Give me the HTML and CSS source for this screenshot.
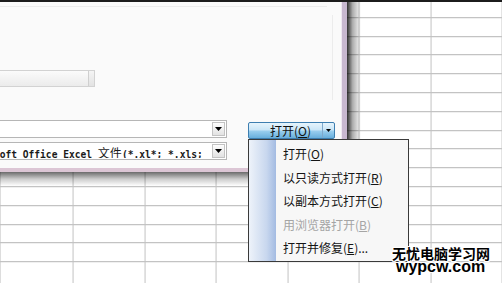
FILE: index.html
```html
<!DOCTYPE html>
<html lang="zh-CN">
<head>
<meta charset="utf-8">
<title>打开</title>
<link rel="stylesheet" href="styles.css">
</head>
<body>
<div class="screen">
  <div class="topline"></div>
  <div class="sheet"></div>

  <div class="dialog">
    <div class="dlg-head"></div>
    <div class="dlg-body">
      <div class="list">
        <div class="hscroll"><div class="thumb"></div></div>
      </div>
      <div class="divider"></div>
    </div>
    <div class="dlg-foot">
      <div class="row">
        <div class="combo">
          <span class="combo-text"></span>
          <span class="drop"><svg width="7" height="4" viewBox="0 0 7 4"><path d="M0 0h7L3.5 4z" fill="#000"/></svg></span>
        </div>
        <div class="split-btn">
          <span class="btn-label">打开(<u>O</u>)</span>
          <span class="btn-arrow"><svg width="5" height="3" viewBox="0 0 5 3"><path d="M0 0h5L2.5 3z" fill="#000"/></svg></span>
        </div>
      </div>
      <div class="row">
        <div class="combo">
          <span class="combo-text mono">Microsoft Office Excel <span class="cjk">文件</span>(*.xl*; *.xls;</span>
          <span class="drop"><svg width="7" height="4" viewBox="0 0 7 4"><path d="M0 0h7L3.5 4z" fill="#000"/></svg></span>
        </div>
      </div>
    </div>
  </div>

  <div class="menu">
    <div class="gutter"></div>
    <ul class="items">
      <li>打开(<u>O</u>)</li>
      <li>以只读方式打开(<u>R</u>)</li>
      <li>以副本方式打开(<u>C</u>)</li>
      <li class="disabled">用浏览器打开(<u>B</u>)</li>
      <li>打开并修复(<u>E</u>)...</li>
    </ul>
  </div>

  <div class="watermark">
    <div class="wm-cn">无忧电脑学习网</div>
    <div class="wm-en">wypcw.com</div>
  </div>
</div>
</body>
</html>
```

FILE: styles.css
```css
* { box-sizing: border-box; }
html, body { margin: 0; padding: 0; }
body {
  width: 502px;
  height: 283px;
  overflow: hidden;
  background: #fff;
  font-family: "Noto Sans CJK SC", "Noto Sans", sans-serif;
}
.screen {
  position: relative;
  width: 502px;
  height: 283px;
  overflow: hidden;
}
.topline {
  position: relative;
  z-index: 5;
  height: 2px;
  background: #1c1c1c;
}
.sheet {
  height: 281px;
  background-color: #fff;
  background-image:
    repeating-linear-gradient(to right, transparent 0 70.43px, #c2c2c2 70.43px 71.43px),
    repeating-linear-gradient(to bottom, transparent 0 17.8px, #b4b4b4 17.8px 18.8px);
  background-position: 2.57px -2.8px, 2.57px -2.8px;
}

/* dialog window */
.dialog {
  position: absolute;
  left: -40px;
  top: 0;
  width: 387px;
  height: 172px;
  background: #fafafa;
  border-right: 5px solid #c8b8d0;
  border-bottom: 4px solid #dcc6d5;
  box-shadow: inset -1px 0 0 #efe9f2;
}
.dialog::before {
  content: "";
  position: absolute;
  left: 0;
  right: -19px;
  top: calc(100% + 4px);
  height: 14px;
  background: linear-gradient(rgba(0,0,0,.58), rgba(0,0,0,.2) 50%, rgba(0,0,0,0));
}
.dialog::after {
  content: "";
  position: absolute;
  left: calc(100% + 5px);
  top: 0;
  width: 14px;
  height: calc(100% + 4px);
  background: linear-gradient(to right, rgba(0,0,0,.8), rgba(0,0,0,.32) 40%, rgba(0,0,0,0));
}
.dlg-head {
  height: 7px;
  margin-right: 15px;
  border-bottom: 1px solid #ececec;
}
.dlg-body {
  display: flex;
  height: 113px;
}
.list {
  flex: 1;
  padding-top: 63px;
}
.hscroll {
  width: 135px;
  height: 17px;
  border: 1px solid #d2d2d2;
  background: linear-gradient(#fbfbfb, #ebebeb);
  display: flex;
  justify-content: flex-end;
}
.thumb {
  width: 6px;
  height: 100%;
  border-left: 1px solid #cfcfcf;
  background: linear-gradient(#f4f4f4, #e2e2e2);
}
.divider {
  width: 1px;
  height: 85px;
  margin: 8px 9px 0 0;
  background: #ececec;
}

.dlg-foot {
  display: flex;
  flex-direction: column;
  gap: 3px;
}
.row {
  display: flex;
  align-items: flex-start;
}
.combo {
  display: flex;
  width: 267px;
  height: 18px;
  padding: 1px;
  border: 1px solid #b6b6b6;
  background: #fff;
}
.combo-text {
  flex: 1;
  overflow: hidden;
  white-space: nowrap;
  padding-left: 3px;
  margin-right: 5px;
}
.mono {
  font-family: "DejaVu Sans Mono", "Liberation Mono", monospace;
  font-size: 9.6px;
  font-weight: bold;
  line-height: 17px;
  color: #1a1a1a;
}
.cjk {
  font-family: "Noto Sans CJK SC", sans-serif;
  font-size: 12px;
  font-weight: normal;
}
.drop {
  width: 13px;
  height: 14px;
  border: 1px solid #c3c3c3;
  background: linear-gradient(#fdfdfd, #e2e2e2);
  display: flex;
  align-items: center;
  justify-content: center;
}

.split-btn {
  display: flex;
  width: 87px;
  height: 17px;
  margin: 2px 0 0 21px;
  border: 1px solid #3d7eb0;
  border-radius: 2px;
  background: linear-gradient(#e6f4fc 0%, #cbe6f7 45%, #98cdee 55%, #68afdc 100%);
  font-size: 12px;
  line-height: 15px;
  color: #111;
}
.btn-label {
  width: 74px;
  padding-left: 21px;
  white-space: nowrap;
  border-right: 1px solid #7fa9cc;
}
.btn-arrow {
  flex: 1;
  display: flex;
  align-items: center;
  justify-content: center;
}

/* dropdown menu */
.menu {
  position: absolute;
  left: 248px;
  top: 139px;
  width: 161px;
  height: 123px;
  display: flex;
  border: 1px solid #3a3a3a;
  background: #f7f7f7;
  z-index: 3;
}
.gutter {
  width: 27px;
  background: linear-gradient(to right, #eef3fa, #c8d7ee 65%, #a3bbe2);
}
.items {
  list-style: none;
  margin: 0;
  padding: 2px 0 0 7px;
  font-size: 12px;
  color: #151515;
}
.items li {
  height: 23.5px;
  line-height: 23.5px;
  white-space: nowrap;
}
.items li.disabled { color: #a5a5a5; }

/* watermark */
.watermark {
  position: absolute;
  left: 392px;
  top: 246px;
  z-index: 4;
  color: #000;
  font-weight: bold;
  text-shadow: 1px 0 0 #fff, -1px 0 0 #fff, 0 1px 0 #fff, 0 -1px 0 #fff,
               1px 1px 0 #fff, -1px -1px 0 #fff, 1px -1px 0 #fff, -1px 1px 0 #fff;
}
.wm-cn {
  font-family: "Noto Sans CJK SC", sans-serif;
  font-size: 14px;
  line-height: 15px;
  white-space: nowrap;
}
.wm-en {
  font-family: "Liberation Sans", Arial, sans-serif;
  font-size: 16px;
  line-height: 14px;
  margin: -1px 0 0 4px;
}
```
